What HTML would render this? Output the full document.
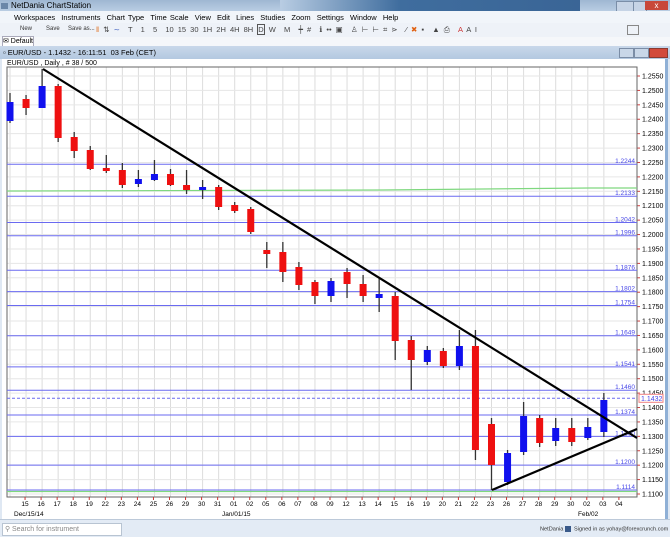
<!DOCTYPE html><html><head><meta charset="utf-8"><style>
body{margin:0;width:670px;height:536px;overflow:hidden;background:#dfe8f3;font-family:"Liberation Sans",sans-serif;position:relative}
.a{position:absolute}
.t{font-size:8px;color:#000;white-space:nowrap}
</style></head><body>
<div class="a" style="left:0;top:0;width:670px;height:11px;background:linear-gradient(#9fb7d2,#b9cde3)"></div>
<div class="a t" style="left:11px;top:1px;font-size:8px">NetDania ChartStation</div>
<div class="a" style="left:1px;top:3px;width:7px;height:6px;background:#6b87a8"></div>
<div class="a" style="left:280px;top:0;width:300px;height:11px;background:linear-gradient(90deg,#b9cde3,#3f6d9e 40%,#3a6596)"></div>
<div class="a" style="left:616px;top:1px;width:16px;height:9px;background:#c6d4e6;border:1px solid #7a8ea8"></div>
<div class="a" style="left:633px;top:1px;width:12px;height:9px;background:#c6d4e6;border:1px solid #7a8ea8"></div>
<div class="a" style="left:645px;top:1px;width:23px;height:9px;background:#c8483a;color:#fff;font-size:8px;text-align:center;line-height:9px">x</div>
<div class="a" style="left:0;top:11px;width:670px;height:12px;background:#f1f5fa"></div>
<div class="a t" style="left:14px;top:13px;font-size:7.5px;word-spacing:1px">Workspaces &nbsp;Instruments &nbsp;Chart Type &nbsp;Time Scale &nbsp;View &nbsp;Edit &nbsp;Lines &nbsp;Studies &nbsp;Zoom &nbsp;Settings &nbsp;Window &nbsp;Help</div>
<div class="a" style="left:0;top:23px;width:670px;height:14px;background:#eef2f8;border-bottom:1px solid #c5cfdc"></div>
<div class="a t" style="left:20px;top:26px;font-size:6px;color:#333">New</div>
<div class="a t" style="left:46px;top:26px;font-size:6px;color:#333">Save</div>
<div class="a t" style="left:68px;top:26px;font-size:6px;color:#333">Save as...</div>
<div class="a t" style="left:96px;top:25px;font-size:7.5px;color:#444;word-spacing:2px"><span style="color:#e07020">‖</span> ⇅ <span style="color:#4060c0">∼</span> &nbsp;T &nbsp;1 &nbsp;5 &nbsp;10 15 30 1H 2H 4H 8H <span style="border:1px solid #555">D</span> W &nbsp;M &nbsp;┿ # &nbsp;ℹ •• ▣ &nbsp;♙ ⊢ ⊢ ⌗ ⋗ &nbsp;⁄ <span style="color:#e06010">✖</span> ▪ &nbsp;▲ ⎙ &nbsp;<span style="color:#c33">A</span> A Ι</div>
<div class="a" style="left:627px;top:25px;width:10px;height:8px;border:1px solid #888"></div>
<div class="a" style="left:0;top:37px;width:670px;height:9px;background:#f5f7fa"></div>
<div class="a t" style="left:2px;top:36px;width:30px;height:9px;background:#fff;border:1px solid #aab;font-size:7px">✉ Default</div>
<div class="a" style="left:0;top:46px;width:670px;height:13px;background:linear-gradient(#c9d8ea,#b3c8e0)"></div>
<div class="a t" style="left:3px;top:48px;font-size:7.5px">▫ EUR/USD - 1.1432 - 16:11:51 &nbsp;03 Feb (CET)</div>
<div class="a" style="left:619px;top:48px;width:13px;height:8px;background:#c9d7e8;border:1px solid #7b8da6"></div>
<div class="a" style="left:634px;top:48px;width:13px;height:8px;background:#c9d7e8;border:1px solid #7b8da6"></div>
<div class="a" style="left:649px;top:48px;width:17px;height:8px;background:#d24a3b;border:1px solid #8a3a30"></div>
<div class="a" style="left:2px;top:59px;width:663px;height:460px;background:#fff"></div>
<div class="a" style="left:665px;top:59px;width:3px;height:460px;background:#8fb0d6"></div>
<div class="a t" style="left:7px;top:60px;font-size:7px">EUR/USD , Daily , # 38 / 500</div>
<svg class="a" id="c" style="left:0;top:0" width="670" height="536"></svg>
<div class="a" style="left:0;top:519px;width:670px;height:17px;background:#e3ebf5;border-top:1px solid #bcc9d9"></div>
<div class="a t" style="left:2px;top:523px;width:118px;height:11px;background:#fff;border:1px solid #b8c4d2;font-size:7px;color:#888;line-height:11px">&nbsp;⚲ Search for instrument</div>
<div class="a t" style="left:540px;top:526px;font-size:5.6px;color:#333">NetDania <span style="display:inline-block;width:6px;height:6px;background:#3a5a8a;vertical-align:middle"></span> &nbsp;Signed in as yohay@forexcrunch.com</div>
<script>
var s='',L=7,R=637,T=67,B=497;
function y(p){return 76+(1.2550-p)/0.005*14.414;}
function X(i){return 10+16.05*i;}
for(var i=0;i<38;i++){var x=X(i);s+='<line x1="'+x+'" y1="'+T+'" x2="'+x+'" y2="'+B+'" stroke="#dcdcdc" stroke-width="1"/>';}
for(var k=0;k<=29;k++){var p=1.2550-k*0.005,yy=y(p);s+='<line x1="'+L+'" y1="'+yy+'" x2="'+R+'" y2="'+yy+'" stroke="#e6e6e6"/>';s+='<line x1="'+R+'" y1="'+yy+'" x2="'+(R+3)+'" y2="'+yy+'" stroke="#d04040"/><text x="'+(R+5)+'" y="'+(yy+2.5)+'" font-size="7" font-family="Liberation Sans">'+p.toFixed(4)+'</text>';}
s+='<rect x="'+L+'" y="'+T+'" width="'+(R-L)+'" height="'+(B-T)+'" fill="none" stroke="#666"/>';
s+='<polyline points="'+L+',191 380,190 590,188 '+R+',188" fill="none" stroke="#7fd87f" stroke-width="1.2"/>';
s+='<line x1="'+L+'" y1="491.5" x2="'+R+'" y2="491.5" stroke="#7fd87f" stroke-width="1.2"/>';
var hl=[1.2244,1.2133,1.2042,1.1996,1.1876,1.1802,1.1754,1.1649,1.1541,1.1460,1.1374,1.1300,1.1200,1.1114];
hl.forEach(function(p){var yy=y(p);s+='<line x1="'+L+'" y1="'+yy+'" x2="'+R+'" y2="'+yy+'" stroke="#6a6af0" stroke-width="1"/><text x="'+(R-2)+'" y="'+(yy-1)+'" font-size="6.5" fill="#4848e8" text-anchor="end" font-family="Liberation Sans">'+p.toFixed(4)+'</text>';});
var yd=y(1.1432);s+='<line x1="'+L+'" y1="'+yd+'" x2="'+R+'" y2="'+yd+'" stroke="#6a6af0" stroke-dasharray="3,2"/><rect x="'+(R+2)+'" y="'+(yd-4)+'" width="24" height="8" fill="#fff" stroke="#f08080"/><text x="'+(R+4)+'" y="'+(yd+2.5)+'" font-size="7" fill="#4848e8" font-family="Liberation Sans">1.1432</text>';
var c=[[1,102,121,93,123],[0,99,108,95,115],[1,86,108,69,108],[0,86,138,84,142],[0,137,151,132,158],[0,150,169,146,170],[0,168,171,155,173],[0,170,185,163,188],[1,179,184,170,187],[1,174,180,160,181],[0,174,185,169,186],[0,185,190,170,194],[1,187,190,180,199],[0,187,207,185,210],[0,205,211,202,213],[0,209,232,207,234],[0,250,254,242,268],[0,252,272,242,282],[0,267,285,262,290],[0,282,296,280,304],[1,281,296,278,302],[0,272,284,268,298],[0,284,296,275,302],[1,294,298,278,312],[0,296,341,292,360],[0,340,360,336,390],[1,350,362,346,365],[0,351,366,348,368],[1,346,366,330,370],[0,346,450,330,460],[0,424,465,418,490],[1,453,482,450,485],[1,416,452,402,455],[0,418,443,415,447],[1,428,441,418,446],[0,428,442,418,446],[1,427,438,418,440],[1,400,432,393,437]];
c.forEach(function(d,i){var x=X(i);s+='<line x1="'+x+'" y1="'+d[3]+'" x2="'+x+'" y2="'+d[4]+'" stroke="#333" stroke-width="1.3"/><rect x="'+(x-3.5)+'" y="'+d[1]+'" width="7" height="'+Math.max(2,d[2]-d[1])+'" fill="'+(d[0]?'#1010ee':'#ee1010')+'"/>';});
s+='<line x1="43" y1="69" x2="'+R+'" y2="438" stroke="#000" stroke-width="2.2"/><line x1="492" y1="490" x2="'+R+'" y2="429" stroke="#000" stroke-width="2.2"/>';
var lb=['15','16','17','18','19','22','23','24','25','26','29','30','31','01','02','05','06','07','08','09','12','13','14','15','16','19','20','21','22','23','26','27','28','29','30','02','03','04'];
lb.forEach(function(t,i){var x=X(i+1)-1;s+='<line x1="'+x+'" y1="'+B+'" x2="'+x+'" y2="'+(B+3)+'" stroke="#c33"/><text x="'+x+'" y="506" font-size="6.5" text-anchor="middle" font-family="Liberation Sans">'+t+'</text>';});
s+='<text x="14" y="516" font-size="6.5" font-family="Liberation Sans">Dec/15/14</text><text x="222" y="516" font-size="6.5" font-family="Liberation Sans">Jan/01/15</text><text x="578" y="516" font-size="6.5" font-family="Liberation Sans">Feb/02</text>';
document.getElementById('c').innerHTML=s;
</script>
</body></html>
